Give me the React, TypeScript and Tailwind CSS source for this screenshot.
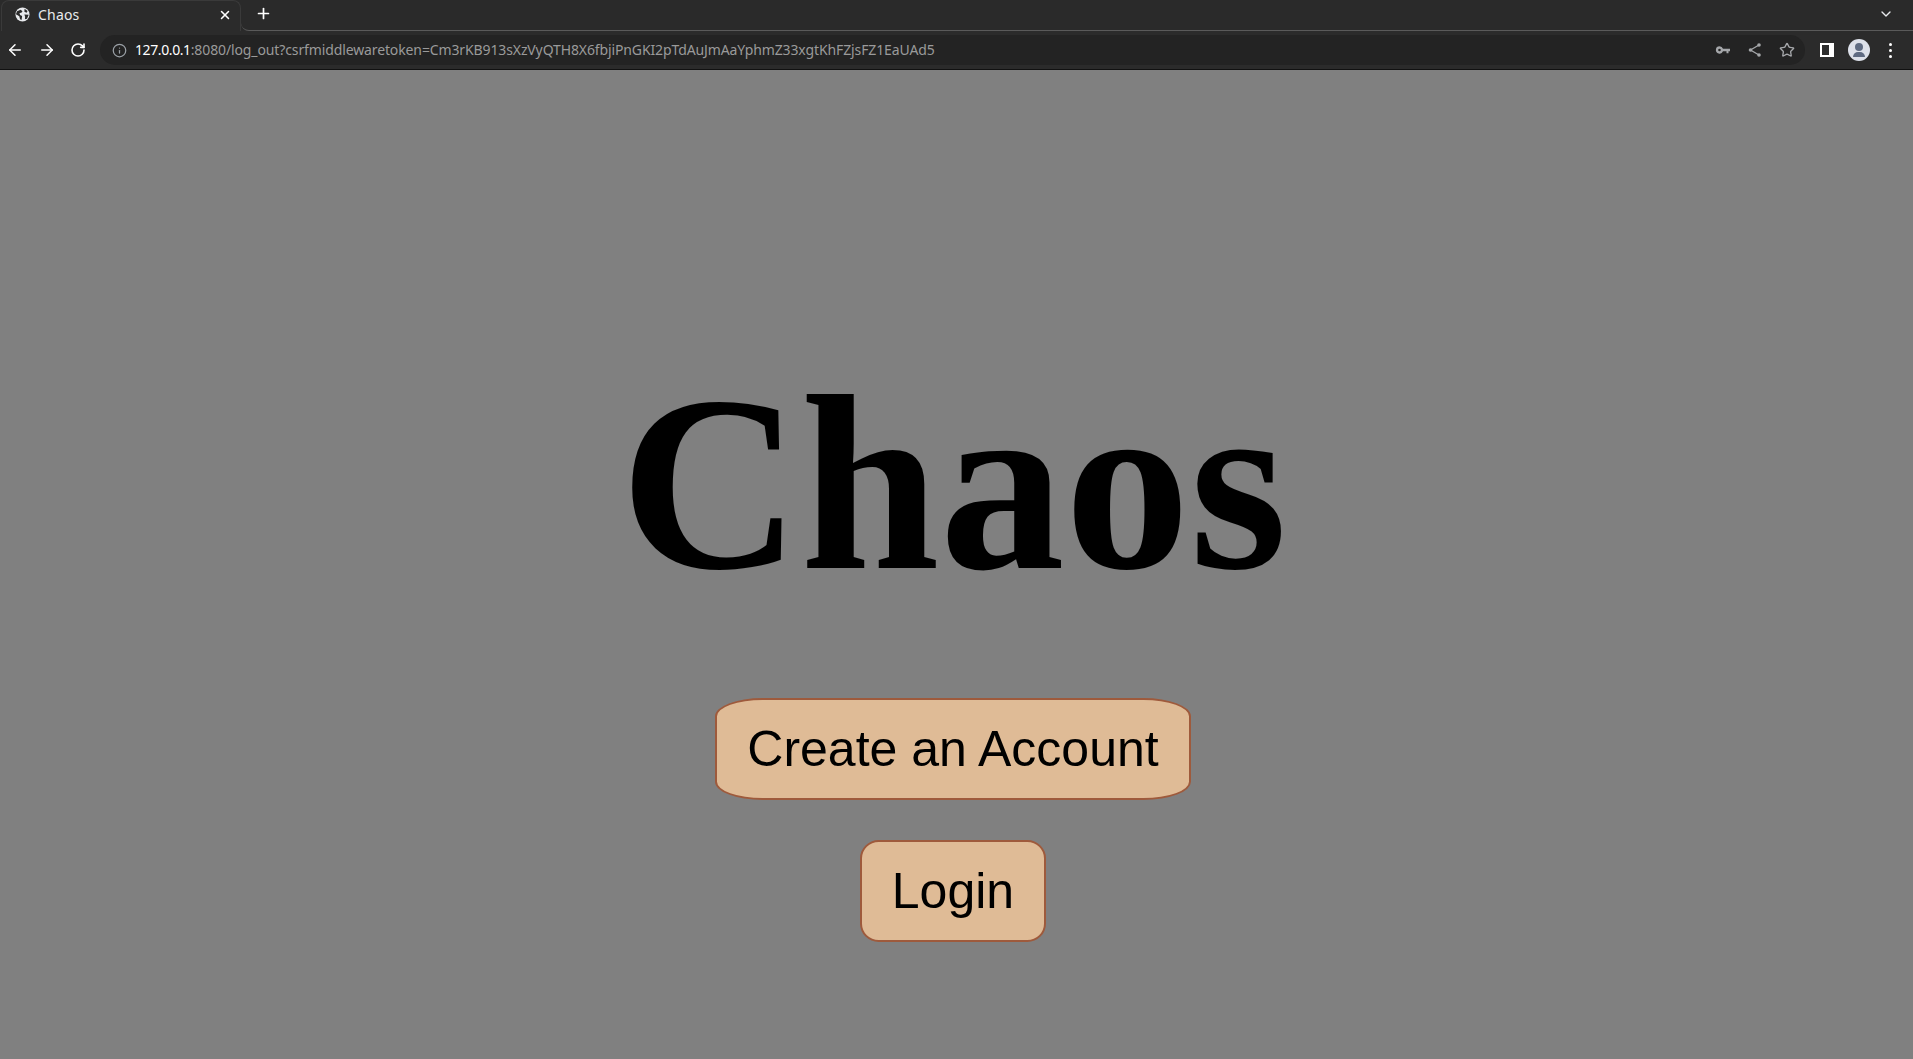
import React from 'react';
import { ArrowLeft, ArrowRight, RotateCw, Info, Plus, X, ChevronDown, Star } from 'lucide-react';

function Globe() {
  return (
    <svg viewBox="0 0 16 16" className="w-[15px] h-[15px]">
      <circle cx="8" cy="8" r="7.5" fill="#e8eaed" />
      <path d="M2.2 4.5 L6 2.8 L8 4.5 L6.8 6.2 L4.8 6.4 L5.4 8.4 L7.6 9.6 L7 13.8 L5.4 13 L4.6 9.8 L1 7.6 Z" fill="#2a2a2a" />
      <path d="M10.2 1.8 L13.4 4.2 L12.4 6 L10 5 Z M10 8 L14.6 8.2 L12.8 12.4 L10.6 13 L10.8 10.4 Z" fill="#2a2a2a" />
    </svg>
  );
}

function KeyIcon() {
  return (
    <svg viewBox="0 0 16 16" className="w-[16px] h-[16px]" fill="#a5a7aa">
      <path fillRule="evenodd" d="M4.5 4.2a3.7 3.7 0 0 1 3.5 2.5H15v2.6h-1.5v1.9h-2V9.3H8A3.7 3.7 0 1 1 4.5 4.2Zm0 2.5a1.3 1.3 0 1 0 0 2.6 1.3 1.3 0 0 0 0-2.6Z" />
    </svg>
  );
}

function ShareIcon() {
  return (
    <svg viewBox="0 0 16 16" className="w-[16px] h-[16px]" fill="#a5a7aa" stroke="#a5a7aa">
      <path d="M12 3 L3.5 8 L12 13" fill="none" strokeWidth={1.3} />
      <circle cx="12" cy="3" r="1.8" strokeWidth={0} />
      <circle cx="3.5" cy="8" r="1.8" strokeWidth={0} />
      <circle cx="12" cy="13" r="1.8" strokeWidth={0} />
    </svg>
  );
}

function BrowserChrome() {
  return (
    <div className="font-['Noto_Sans',sans-serif]">
      <div className="flex h-[31px] bg-[#2a2a2a]">
        <div className="flex items-center w-[240px] h-[31px] pb-[3px] pl-[13px] ml-[1px] bg-[#2b2b2b] rounded-t-[8px] border-x border-t border-[#3a3a3a]">
          <Globe />
          <span className="ml-[8px] text-[14px] tracking-[0.2px] text-[#e8eaed]">Chaos</span>
          <X className="ml-auto mr-[8px] w-[14px] h-[14px] text-white" strokeWidth={2.6} />
        </div>
        <div className="flex-1 h-[31px] pb-[3px] border-b border-[#5a5a5a] rounded-bl-[8px] flex items-center">
          <Plus className="ml-[14px] w-[17px] h-[17px] text-white" strokeWidth={2.4} />
          <ChevronDown className="ml-auto mr-[19px] w-[16px] h-[16px] text-[#e8eaed]" strokeWidth={2} />
        </div>
      </div>
      <div className="flex items-center h-[39px] bg-[#2b2b2b] border-b border-[#111]">
        <div className="flex items-center w-[100px] pl-[6px] gap-[14px]">
          <ArrowLeft className="w-[18px] h-[18px] text-white" strokeWidth={2} />
          <ArrowRight className="w-[18px] h-[18px] text-white" strokeWidth={2} />
          <RotateCw className="w-[16px] h-[16px] text-white" strokeWidth={2.4} />
        </div>
        <div className="flex-1 flex items-center h-[30px] rounded-full bg-[#232323] pl-[12px] pr-[10px]">
          <Info className="w-[15px] h-[15px] text-[#9aa0a6]" strokeWidth={2} />
          <span className="ml-[8px] mb-[1px] text-[14px] tracking-[-0.12px] text-[#9a9a9a] whitespace-nowrap">
            <span className="text-white tracking-[-0.4px]">127.0.0.1</span>:8080/log_out?csrfmiddlewaretoken=Cm3rKB913sXzVyQTH8X6fbjiPnGKI2pTdAuJmAaYphmZ33xgtKhFZjsFZ1EaUAd5
          </span>
          <div className="ml-auto flex items-center gap-[16px]">
            <KeyIcon />
            <ShareIcon />
            <Star className="w-[16px] h-[16px] text-[#a5a7aa]" strokeWidth={2} />
          </div>
        </div>
        <div className="flex items-center w-[108px] pl-[15px]">
          <div className="w-[14px] h-[14px] bg-white flex items-center pl-[2px]">
            <div className="w-[7px] h-[10px] bg-[#2b2b2b]" />
          </div>
          <div className="ml-[14px] w-[22px] h-[22px] rounded-full bg-[#dde1ea] flex flex-col items-center justify-center">
            <div className="w-[8px] h-[8px] rounded-full bg-[#5f6b82]" />
            <div className="mt-[1px] w-[12px] h-[5px] rounded-t-full bg-[#5f6b82]" />
          </div>
          <div className="ml-[19px] flex flex-col gap-[3px]">
            <div className="w-[3px] h-[3px] rounded-full bg-white" />
            <div className="w-[3px] h-[3px] rounded-full bg-white" />
            <div className="w-[3px] h-[3px] rounded-full bg-white" />
          </div>
        </div>
      </div>
    </div>
  );
}

function App() {
  return (
    <div className="h-[1059px] w-full overflow-hidden bg-[#808080] flex flex-col">
      <BrowserChrome />
      <div className="flex-1 flex flex-col items-center pt-[270px]">
        <h1 className="text-[250px] leading-[287px] font-bold text-black mr-[6px] font-['Liberation_Serif',serif]">Chaos</h1>
        <div className="flex flex-col items-center gap-[40px] mt-[71px] mr-[7px] font-['Liberation_Sans',sans-serif] text-[50px] text-black">
          <button className="h-[102px] px-[30px] bg-[#dfbb96] border-2 border-[#9e5a3c] rounded-[10%/18%]">Create an Account</button>
          <button className="h-[102px] px-[30px] bg-[#dfbb96] border-2 border-[#9e5a3c] rounded-[10%/18%]">Login</button>
        </div>
      </div>
    </div>
  );
}

export default App;
